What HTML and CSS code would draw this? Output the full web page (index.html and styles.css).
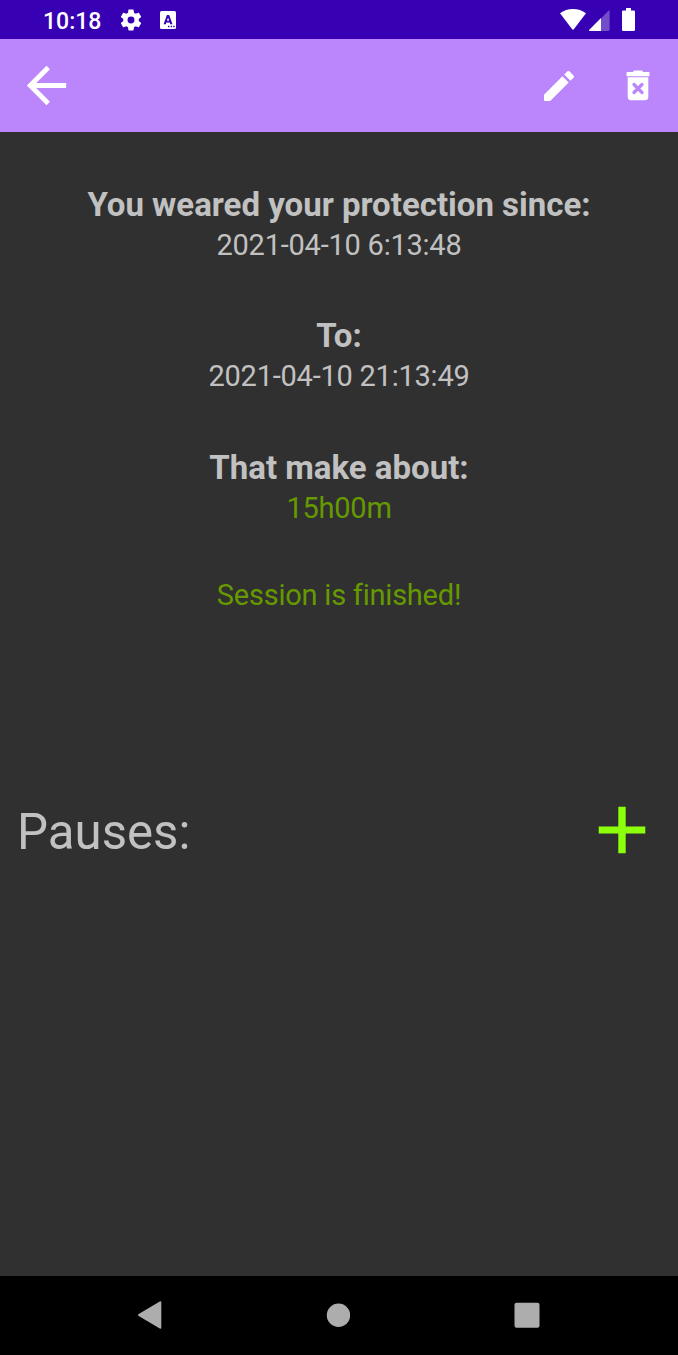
FILE: index.html
```html
<!DOCTYPE html>
<html lang="en">
<head>
<meta charset="utf-8">
<title>Session details</title>
<link rel="stylesheet" href="styles.css">
</head>
<body>
<div class="screen">
  <header class="status">
    <span class="clock">10:18</span>
    <svg class="gear" width="26" height="26" viewBox="0 0 24 24"><path d="M19.14 12.94c.04-.3.06-.61.06-.94 0-.32-.02-.64-.07-.94l2.03-1.58c.18-.14.23-.41.12-.61l-1.92-3.32c-.12-.22-.37-.29-.59-.22l-2.39.96c-.5-.38-1.03-.7-1.62-.94l-.36-2.54c-.04-.24-.24-.41-.48-.41h-3.84c-.24 0-.43.17-.47.41l-.36 2.54c-.59.24-1.13.57-1.62.94l-2.39-.96c-.22-.08-.47 0-.59.22L2.74 8.87c-.12.21-.08.47.12.61l2.03 1.58c-.05.3-.09.63-.09.94s.02.64.07.94l-2.03 1.58c-.18.14-.23.41-.12.61l1.92 3.32c.12.22.37.29.59.22l2.39-.96c.5.38 1.03.7 1.62.94l.36 2.54c.05.24.24.41.48.41h3.84c.24 0 .44-.17.47-.41l.36-2.54c.59-.24 1.13-.56 1.62-.94l2.39.96c.22.08.47 0 .59-.22l1.92-3.32c.12-.22.07-.47-.12-.61l-2.01-1.58zM12 15.2A3.2 3.2 0 1 1 12 8.8a3.2 3.2 0 0 1 0 6.4z"/></svg>
    <svg class="keyboard" width="16" height="18" viewBox="0 0 16 18"><rect width="16" height="18" rx="1.5"/><path class="cut" fill-rule="evenodd" d="M3.6 13.3 6.9 4h2.3l3.3 9.3h-2.2l-.6-1.8H6.4l-.6 1.8zM6.9 9.8h2.3L8.05 6.4z"/><path class="cut" d="M8 14.8h1.4v1.4H8zm2.7 0h1.4v1.4h-1.4zm2.6 0h1.4v1.4h-1.4z"/></svg>
    <div class="signals">
      <svg width="26" height="21" viewBox="0 0 26 21"><path d="M0 4.3Q5.5 0 13 0t13 4.3L13.8 20.2q-.8.9-1.6 0z"/></svg>
      <svg class="cell" width="21" height="21" viewBox="0 0 21 21"><path class="dim" d="M12 8.5 19.2 1q1.4-1.2 1.4.5v18q0 1.5-1.5 1.5H12z"/><path d="M12 8V21H1Q-.5 21 .3 19.8z"/></svg>
      <svg class="battery" width="13" height="23" viewBox="0 0 13 23"><path d="M4 0h5v2.5h2.8q1.2 0 1.2 1.2v18q0 1.3-1.3 1.3H1.3Q0 23 0 21.7v-18q0-1.2 1.2-1.2H4z"/></svg>
    </div>
  </header>
  <nav class="appbar">
    <svg width="59" height="59" viewBox="0 0 24 24"><path d="M20 11H7.830l5.590-5.590L12 4l-8 8 8 8 1.410-1.410L7.830 13H20v-2z"/></svg>
    <div class="actions">
      <svg width="40" height="40" viewBox="0 0 24 24"><path d="M3 17.460v3.040c0 .280.220.500.500.500h3.040c.130 0 .260-.050.350-.150L17.810 9.940l-3.750-3.750L3.150 17.100c-.100.100-.150.220-.150.360zM20.710 7.040c.390-.390.390-1.020 0-1.410l-2.340-2.340c-.390-.390-1.020-.390-1.410 0l-1.830 1.830 3.750 3.750 1.830-1.830z"/></svg>
      <svg width="24" height="31" viewBox="0 0 24 31"><path d="M7 2 8 .5h8L17 2h6q.5 0 .5.5v3.200q0 .5-.5.5H1q-.5 0-.5-.5V2.500Q.5 2 1 2z"/><path d="M1.700 7.300h20.600v19.500q0 3.500-3.500 3.500H5.200q-3.500 0-3.500-3.500z"/><path class="cross" d="m8 14.500 8 8m0-8-8 8"/></svg>
    </div>
  </nav>
  <main class="content">
    <section class="group"><h2>You weared your protection since:</h2><p>2021-04-10 6:13:48</p></section>
    <section class="group"><h2>To:</h2><p>2021-04-10 21:13:49</p></section>
    <section class="group"><h2>That make about:</h2><p class="ok">15h00m</p></section>
    <p class="ok result">Session is finished!</p>
    <div class="pauses">
      <span>Pauses:</span>
      <svg width="48" height="48" viewBox="0 0 48 48"><path d="M20.300 .7h7.400v19.800h19.600v7H27.700v19.800h-7.400V27.500H.7v-7h19.600z"/></svg>
    </div>
  </main>
  <footer class="navbar">
    <svg width="24" height="28" viewBox="0 0 24 28"><path d="M.7 13 21.800.6q1.500-.8 1.500.8v25.200q0 1.600-1.500.8L.7 15q-1.400-1 0-2z"/></svg>
    <svg width="24" height="24" viewBox="0 0 24 24"><circle cx="12.500" cy="12.300" r="11.700"/></svg>
    <svg width="26" height="26" viewBox="0 0 26 26"><rect x=".5" y=".8" width="25" height="25" rx="2"/></svg>
  </footer>
</div>
</body>
</html>
```
FILE: styles.css
```css
* { box-sizing: border-box; margin: 0; }
body { font-family: Roboto, sans-serif; background: #303030; }
svg { display: block; flex: none; fill: #fff; }
.screen { width: 678px; height: 1355px; display: flex; flex-direction: column; background: #303030; color: #c1c1c1; }
.status { height: 39px; background: #3700b3; color: #fff; display: flex; align-items: center; padding: 0 43px; }
.clock { font-size: 23px; font-weight: 500; line-height: 39px; padding-top: 3px; width: 75px; }
.gear { margin-top: 1px; }
.keyboard { margin: 1px 0 0 16px; }
.cut { fill: #3700b3; }
.signals { display: flex; margin-left: auto; align-items: flex-end; height: 23px; }
.signals svg:first-child { margin-bottom: 1px; }
.cell { margin-left: 3px; }
.dim { opacity: .3; }
.battery { margin-left: 12px; }
.appbar { height: 93px; background: #bb86fc; display: flex; align-items: center; justify-content: space-between; padding: 0 28px 0 16.5px; }
.actions { display: flex; align-items: center; gap: 47px; }
.cross { stroke: #bb86fc; stroke-width: 3.2; stroke-linecap: round; }
.content { flex: 1; padding-top: 52px; text-align: center; }
.group { margin-bottom: 50.3px; }
h2 { font-size: 33px; font-weight: 700; line-height: 42px; height: 42px; }
p { font-size: 29px; letter-spacing: -.23px; font-variant-ligatures: common-ligatures; line-height: 39px; height: 39px; }
.result { margin-top: -1.5px; }
.ok { color: #669900; }
.pauses { display: flex; justify-content: space-between; align-items: center; font-size: 49.2px; line-height: 60px; padding: 0 32px 0 17px; margin-top: 187px; }
.pauses svg { fill: #8cff0a; margin-bottom: 4px; }
.navbar { height: 79px; background: #000; display: flex; align-items: center; justify-content: space-between; padding: 0 138.5px 1px 137.5px; }
.navbar svg { fill: #adadad; }
```
